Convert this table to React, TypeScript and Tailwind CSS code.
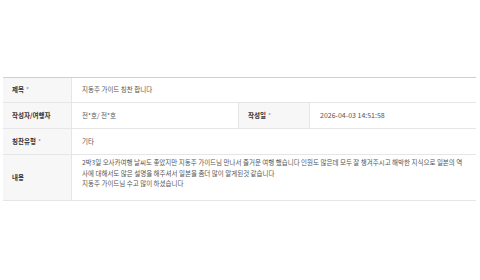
import React from "react";

const Label = ({ children, req }: { children: React.ReactNode; req?: boolean }) => (
  <div className="bg-[#f7f7f7] border-r border-[#e6e6e6] flex items-center pl-[9px] text-[6.5px] font-semibold text-[#333] whitespace-nowrap">
    <span>{children}</span>
    {req && <span className="ml-[2px] text-[#8278d0] font-normal">*</span>}
  </div>
);

const Value = ({ children, className = "" }: { children: React.ReactNode; className?: string }) => (
  <div className={`flex items-center pl-[10px] text-[6.5px] text-[#555] whitespace-nowrap ${className}`}>{children}</div>
);

export default function App() {
  return (
    <div
      className="w-[480px] h-[280px] bg-white pt-[77px] pl-[3px]"
      style={{ fontFamily: '"Noto Sans CJK KR", "Noto Sans", sans-serif' }}
    >
      <div className="w-[473px] border-t border-[#cfcfcf]">
        <div className="grid grid-cols-[69px_1fr] h-[25px] border-b border-[#e6e6e6]">
          <Label req>제목</Label>
          <Value>지동주 가이드 칭찬 합니다</Value>
        </div>
        <div className="grid grid-cols-[69px_167px_71px_1fr] h-[26px] border-b border-[#e6e6e6]">
          <Label>작성자/여행자</Label>
          <Value className="border-r border-[#e6e6e6]">전*호/ 전*호</Value>
          <Label req>작성일</Label>
          <Value className="text-[7px]">2026-04-03 14:51:58</Value>
        </div>
        <div className="grid grid-cols-[69px_1fr] h-[26px] border-b border-[#e6e6e6]">
          <Label req>칭찬유형</Label>
          <Value>기타</Value>
        </div>
        <div className="grid grid-cols-[69px_1fr] h-[46px] border-b border-[#e6e6e6]">
          <Label>내용</Label>
          <div className="flex flex-col justify-start pt-[2px] pl-[10px] text-[6.5px] leading-[10.5px] text-[#555] whitespace-nowrap">
            <div>2박3일 오사카여행 날씨도 좋았지만 지동주 가이드님 만나서 즐거운 여행 했습니다 인원도 많은데 모두 잘 챙겨주시고 해박한 지식으로 일본의 역</div>
            <div>사에 대해서도 많은 설명을 해주셔서 일본을 좀더 많이 알게된것 같습니다</div>
            <div>지동주 가이드님 수고 많이 하셨습니다</div>
          </div>
        </div>
      </div>
    </div>
  );
}
